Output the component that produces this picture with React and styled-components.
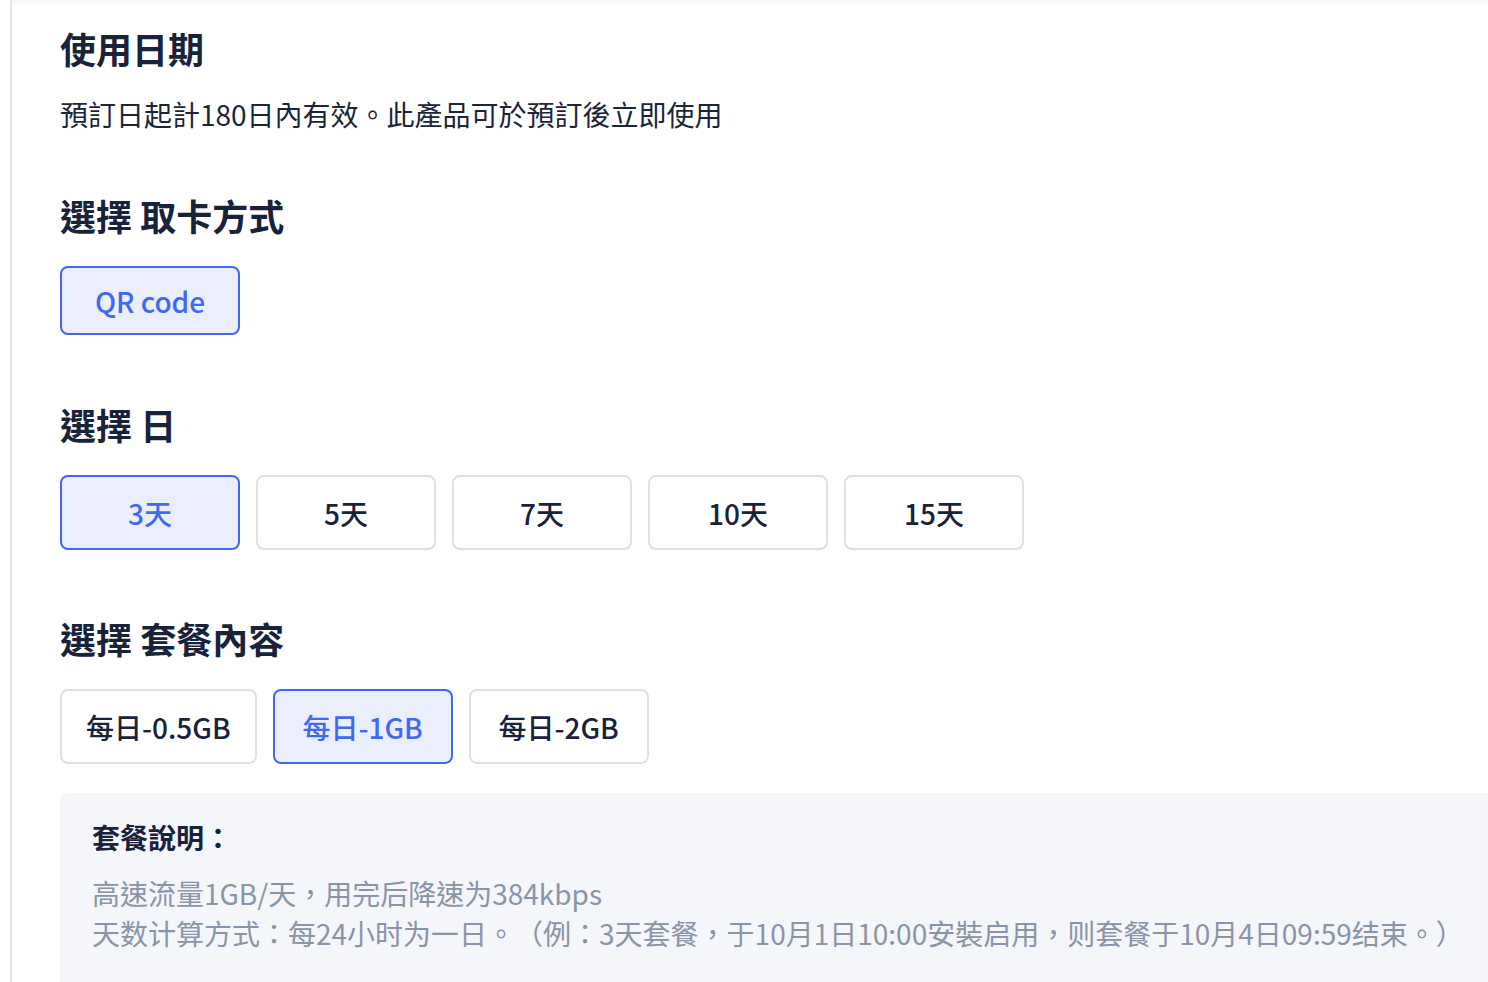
import styled, { createGlobalStyle } from "styled-components";

const GlobalStyle = createGlobalStyle`
  html, body {
    margin: 0;
    padding: 0;
    background: #ffffff;
    overflow: hidden;
  }
  body {
    font-family: "Noto Sans CJK TC", "Noto Sans CJK SC", "Noto Sans", sans-serif;
    color: #1b2538;
    text-spacing-trim: space-all;
  }
`;

const dayOptions = ["3天", "5天", "7天", "10天", "15天"];
const planOptions = ["每日-0.5GB", "每日-1GB", "每日-2GB"];

const App = () => {
  return (
    <>
      <GlobalStyle />
      <Card>
        <Section $gap={21}>
          <Heading>使用日期</Heading>
          <Body>預訂日起計180日內有效。此產品可於預訂後立即使用</Body>
        </Section>

        <Section $top={56}>
          <Heading>選擇 取卡方式</Heading>
          <Options>
            <Option $active $height={69}>QR code</Option>
          </Options>
        </Section>

        <Section $top={64}>
          <Heading>選擇 日</Heading>
          <Options>
            {dayOptions.map((d, i) => (
              <Option key={d} $active={i === 0}>
                {d}
              </Option>
            ))}
          </Options>
        </Section>

        <Section $top={63}>
          <Heading>選擇 套餐內容</Heading>
          <Options>
            {planOptions.map((p, i) => (
              <Option key={p} $active={i === 1}>
                {p}
              </Option>
            ))}
          </Options>
        </Section>

        <InfoBox>
          <InfoTitle>套餐說明：</InfoTitle>
          <InfoText>
            高速流量1GB/天，用完后降速为384kbps
            <br />
            天数计算方式：每24小时为一日。（例：3天套餐，于10月1日10:00安裝启用，则套餐于10月4日09:59结束。）
          </InfoText>
        </InfoBox>
      </Card>
    </>
  );
};
export default App;

const Card = styled.main`
  margin-left: 10px;
  width: 1540px;
  min-height: 1100px;
  padding: 23px 0 0 48px;
  box-sizing: border-box;
  border-left: 2px solid #e3e5ee;
  box-shadow: inset 0 7px 6px -6px rgba(20, 30, 60, 0.07);
  display: flex;
  flex-direction: column;
`;

const Section = styled.section`
  display: flex;
  flex-direction: column;
  gap: ${(p) => p.$gap ?? 26}px;
  margin-top: ${(p) => p.$top ?? 0}px;
`;

const Heading = styled.h2`
  margin: 0;
  font-size: 36px;
  line-height: 50px;
  font-weight: 700;
  color: #18223a;
`;

const Body = styled.p`
  margin: 0;
  font-size: 28px;
  line-height: 40px;
  font-weight: 400;
  color: #1b2538;
`;

const Options = styled.div`
  display: flex;
  gap: 16px;
`;

const Option = styled.button`
  min-width: 180px;
  height: ${(p) => p.$height ?? 75}px;
  padding: 0 24px;
  box-sizing: border-box;
  border-radius: 8px;
  border: 2px solid ${(p) => (p.$active ? "#4068f1" : "#dde0e7")};
  background: ${(p) => (p.$active ? "#ebeffd" : "#ffffff")};
  color: ${(p) => (p.$active ? "#4068f1" : "#18223a")};
  font-family: inherit;
  font-size: 28px;
  font-weight: 500;
  cursor: pointer;
  display: flex;
  align-items: center;
  justify-content: center;
`;

const InfoBox = styled.div`
  margin-top: 29px;
  background: #f5f6fa;
  border-radius: 8px 0 0 0;
  padding: 24px 32px 60px;
`;

const InfoTitle = styled.h3`
  margin: 0 0 16px;
  font-size: 28px;
  line-height: 40px;
  font-weight: 700;
  color: #18223a;
`;

const InfoText = styled.p`
  margin: 0;
  font-size: 28px;
  line-height: 40px;
  font-weight: 400;
  color: #8a94a8;
`;
